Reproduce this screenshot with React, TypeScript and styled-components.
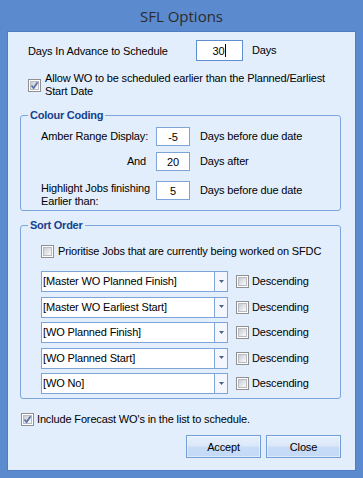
import React from 'react';
import styled, { createGlobalStyle } from 'styled-components';

const GlobalStyle = createGlobalStyle`
  html, body {
    margin: 0;
    padding: 0;
  }
  body {
    font-family: 'Liberation Sans', Arial, sans-serif;
    font-size: 11px;
    letter-spacing: -0.15px;
    color: #000;
  }
`;

const Window = styled.div`
  width: 363px;
  height: 478px;
  box-sizing: border-box;
  padding: 0 7px 7px 7px;
  background: #5c8acf;
  display: flex;
  flex-direction: column;
`;

const TitleBar = styled.div`
  height: 31px;
  flex-shrink: 0;
  display: flex;
  align-items: center;
  justify-content: center;
  font-family: 'Open Sans', 'Noto Sans', sans-serif;
  font-size: 15px;
  letter-spacing: 0;
  color: #2b2b2b;
`;

const Panel = styled.div`
  flex: 1;
  background: #e3eefc;
  border: 1px solid #4f7cc2;
  padding: 8px 14px 12px 12px;
  display: flex;
  flex-direction: column;
`;

const FieldRow = styled.div`
  display: flex;
  align-items: center;
  height: 21px;
  margin-left: 8px;
`;

const FieldLabel = styled.span`
  width: 168px;
`;

const TextBox = styled.div<{ $width: number; $height: number; $focused?: boolean }>`
  width: ${(p) => p.$width}px;
  height: ${(p) => p.$height}px;
  box-sizing: border-box;
  flex-shrink: 0;
  background: #fff;
  border: 1px solid ${(p) => (p.$focused ? '#5f8fd2' : '#7fa4d8')};
  display: flex;
  align-items: center;
  justify-content: center;
`;

const Caret = styled.span`
  width: 1px;
  height: 13px;
  background: #000;
  margin-left: 1px;
`;

const Suffix = styled.span<{ $gap: number }>`
  margin-left: ${(p) => p.$gap}px;
  line-height: 19px;
  white-space: nowrap;
`;

const CheckRow = styled.div<{ $top: number; $left: number; $gap: number }>`
  display: flex;
  align-items: center;
  gap: ${(p) => p.$gap}px;
  margin-top: ${(p) => p.$top}px;
  margin-left: ${(p) => p.$left}px;
  line-height: 13px;
`;

const CheckBoxOuter = styled.span`
  position: relative;
  width: 13px;
  height: 13px;
  box-sizing: border-box;
  flex-shrink: 0;
  border: 1px solid #8f9092;
  background: #fff;
  padding: 1px;
  display: inline-flex;
`;

const CheckBoxInner = styled.span`
  flex: 1;
  border: 1px solid #b9bdc3;
  background: linear-gradient(135deg, #c8ccd2 0%, #e4e6e9 55%, #fbfbfb 100%);
`;

const CheckMark = styled.svg`
  position: absolute;
  left: 1px;
  top: 1px;
`;

const Group = styled.fieldset<{ $top: number; $bottom: number }>`
  margin: ${(p) => p.$top}px 0 0 0;
  padding: 0 10px ${(p) => p.$bottom}px 7px;
  border: 1px solid #7ea6dc;
  border-radius: 3px;
  min-width: 0;
`;

const GroupTitle = styled.legend`
  padding: 0 2px;
  font-weight: bold;
  font-size: 11px;
  line-height: 13px;
  letter-spacing: -0.25px;
  color: #15428b;
`;

const GroupBody = styled.div<{ $top: number }>`
  margin-left: 13px;
  padding-top: ${(p) => p.$top}px;
  display: flex;
  flex-direction: column;
`;

const ColourRow = styled.div<{ $top: number }>`
  display: flex;
  align-items: flex-start;
  margin-top: ${(p) => p.$top}px;
`;

const ColourLabel = styled.span<{ $multiline?: boolean; $right?: boolean }>`
  width: 105px;
  margin-right: 10px;
  white-space: nowrap;
  text-align: ${(p) => (p.$right ? 'right' : 'left')};
  line-height: ${(p) => (p.$multiline ? '13px' : '19px')};
  margin-top: ${(p) => (p.$multiline ? '1px' : '0')};
`;

const ComboList = styled.div`
  display: flex;
  flex-direction: column;
  gap: 4.5px;
  margin-top: 13px;
`;

const ComboRow = styled.div`
  display: flex;
  align-items: center;
`;

const Combo = styled.div`
  width: 187px;
  height: 21px;
  box-sizing: border-box;
  border: 1px solid #7fa4d8;
  background: #fff;
  display: flex;
  margin-right: 8px;
`;

const ComboText = styled.div`
  flex: 1;
  padding-left: 1px;
  line-height: 19px;
  white-space: nowrap;
  overflow: hidden;
`;

const ComboButton = styled.div`
  width: 12px;
  border-left: 1px solid #7fa4d8;
  background: #f3f7fd;
  display: flex;
  align-items: center;
  justify-content: center;
`;

const ButtonRow = styled.div`
  display: flex;
  justify-content: flex-end;
  gap: 5px;
  margin-top: 9px;
`;

const DialogButton = styled.button`
  width: 75px;
  height: 23px;
  padding: 0;
  border: 1px solid #739ed8;
  border-radius: 0;
  box-shadow: inset 0 0 0 1px rgba(255, 255, 255, 0.45);
  background: linear-gradient(#e6f0fc 0%, #dbe8fa 48%, #c8dcf6 52%, #c3d9f6 100%);
  font-family: 'Liberation Sans', Arial, sans-serif;
  font-size: 11px;
  letter-spacing: -0.15px;
  color: #000;
`;

const CheckBox = ({ checked }: { checked?: boolean }) => (
  <CheckBoxOuter>
    <CheckBoxInner />
    {checked && (
      <CheckMark width="9" height="9" viewBox="0 0 9 9">
        <path d="M1.5 4.5 L3.6 7 L7.6 1.2" fill="none" stroke="#5a70a6" strokeWidth="1.7" />
      </CheckMark>
    )}
  </CheckBoxOuter>
);

const sortFields = [
  '[Master WO Planned Finish]',
  '[Master WO Earliest Start]',
  '[WO Planned Finish]',
  '[WO Planned Start]',
  '[WO No]',
];

export default function App() {
  return (
    <>
      <GlobalStyle />
      <Window>
        <TitleBar>SFL Options</TitleBar>
        <Panel>
          <FieldRow>
            <FieldLabel>Days In Advance to Schedule</FieldLabel>
            <TextBox $width={47} $height={21} $focused>
              30
              <Caret />
            </TextBox>
            <Suffix $gap={9}>Days</Suffix>
          </FieldRow>

          <CheckRow $top={11} $left={8} $gap={4}>
            <CheckBox checked />
            <span>
              Allow WO to be scheduled earlier than the Planned/Earliest
              <br />
              Start Date
            </span>
          </CheckRow>

          <Group $top={11} $bottom={2}>
            <GroupTitle>Colour Coding</GroupTitle>
            <GroupBody $top={5}>
              <ColourRow $top={0}>
                <ColourLabel>Amber Range Display:</ColourLabel>
                <TextBox $width={34} $height={19}>-5</TextBox>
                <Suffix $gap={10}>Days before due date</Suffix>
              </ColourRow>
              <ColourRow $top={6}>
                <ColourLabel $right>And</ColourLabel>
                <TextBox $width={34} $height={19}>20</TextBox>
                <Suffix $gap={10}>Days after</Suffix>
              </ColourRow>
              <ColourRow $top={10}>
                <ColourLabel $multiline>
                  Highlight Jobs finishing
                  <br />
                  Earlier than:
                </ColourLabel>
                <TextBox $width={34} $height={19}>5</TextBox>
                <Suffix $gap={10}>Days before due date</Suffix>
              </ColourRow>
            </GroupBody>
          </Group>

          <Group $top={8} $bottom={4}>
            <GroupTitle>Sort Order</GroupTitle>
            <GroupBody $top={13}>
              <CheckRow $top={0} $left={0} $gap={4}>
                <CheckBox />
                <span>Prioritise Jobs that are currently being worked on SFDC</span>
              </CheckRow>
              <ComboList>
                {sortFields.map((field) => (
                  <ComboRow key={field}>
                    <Combo>
                      <ComboText>{field}</ComboText>
                      <ComboButton>
                        <svg width="5" height="4" viewBox="0 0 5 4">
                          <path d="M0 0 H5 L2.5 3 Z" fill="#4d6185" />
                        </svg>
                      </ComboButton>
                    </Combo>
                    <CheckBox />
                    <Suffix $gap={3}>Descending</Suffix>
                  </ComboRow>
                ))}
              </ComboList>
            </GroupBody>
          </Group>

          <CheckRow $top={14} $left={1} $gap={3}>
            <CheckBox checked />
            <span>Include Forecast WO's in the list to schedule.</span>
          </CheckRow>

          <ButtonRow>
            <DialogButton>Accept</DialogButton>
            <DialogButton>Close</DialogButton>
          </ButtonRow>
        </Panel>
      </Window>
    </>
  );
}
